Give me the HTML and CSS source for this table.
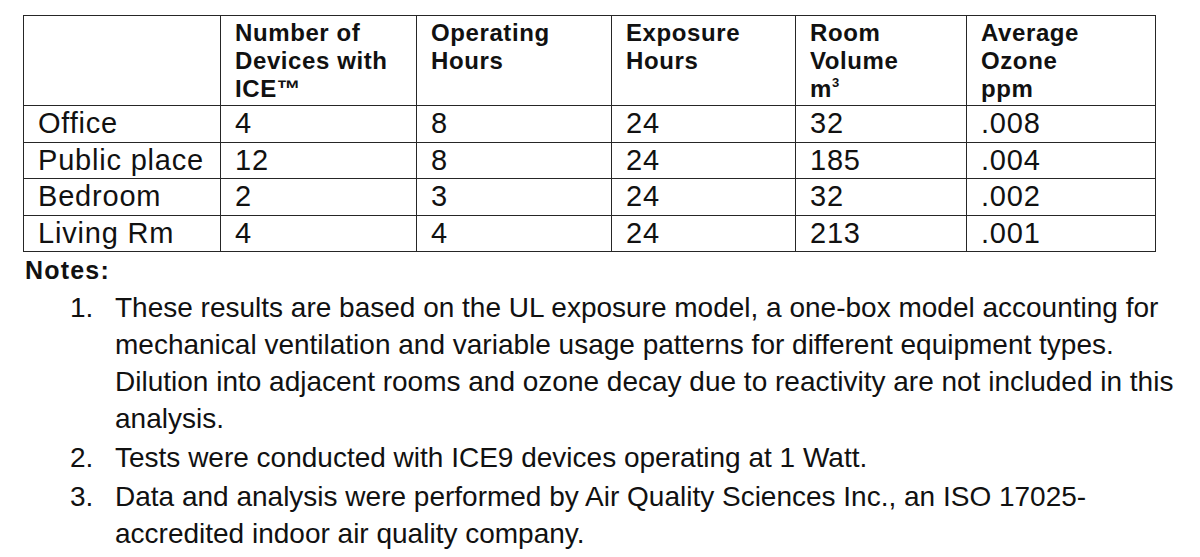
FILE: index.html
```html
<!DOCTYPE html>
<html lang="en">
<head>
<meta charset="utf-8">
<title>ICE Ozone Exposure</title>
<link rel="stylesheet" href="styles.css">
</head>
<body>
<main class="page">
  <table class="data">
    <colgroup>
      <col class="c1"><col class="c2"><col class="c3"><col class="c4"><col class="c5"><col class="c6">
    </colgroup>
    <thead>
      <tr>
        <th></th>
        <th>Number of Devices with ICE™</th>
        <th>Operating Hours</th>
        <th>Exposure Hours</th>
        <th>Room<br>Volume<br>m<sup>3</sup></th>
        <th>Average<br>Ozone<br>ppm</th>
      </tr>
    </thead>
    <tbody>
      <tr><td>Office</td><td>4</td><td>8</td><td>24</td><td>32</td><td>.008</td></tr>
      <tr><td>Public place</td><td>12</td><td>8</td><td>24</td><td>185</td><td>.004</td></tr>
      <tr><td>Bedroom</td><td>2</td><td>3</td><td>24</td><td>32</td><td>.002</td></tr>
      <tr><td>Living Rm</td><td>4</td><td>4</td><td>24</td><td>213</td><td>.001</td></tr>
    </tbody>
  </table>
  <section class="notes">
    <h2 class="notes-title">Notes:</h2>
    <ol class="notes-list">
      <li class="note"><span class="num">1.</span><span class="txt">These results are based on the UL exposure model, a one-box model accounting for mechanical ventilation and variable usage patterns for different equipment types. Dilution into adjacent rooms and ozone decay due to reactivity are not included in this analysis.</span></li>
      <li class="note"><span class="num">2.</span><span class="txt">Tests were conducted with ICE9 devices operating at 1 Watt.</span></li>
      <li class="note"><span class="num">3.</span><span class="txt">Data and analysis were performed by Air Quality Sciences Inc., an ISO 17025-accredited indoor air quality company.</span></li>
    </ol>
  </section>
</main>
</body>
</html>
```

FILE: styles.css
```css
html, body {
  margin: 0;
  padding: 0;
  background: #ffffff;
}

body {
  font-family: "Liberation Sans", Arial, sans-serif;
  color: #111111;
}

.page {
  padding: 15px 0 0 23px;
}

.data {
  border-collapse: collapse;
  table-layout: fixed;
  width: 1132px;
}

.c1 { width: 197px; }
.c2 { width: 196px; }
.c3 { width: 195px; }
.c4 { width: 184px; }
.c5 { width: 171px; }
.c6 { width: 189px; }

.data th,
.data td {
  border: 1px solid #262626;
  text-align: left;
  vertical-align: top;
}

.data th {
  font-weight: bold;
  font-size: 24px;
  letter-spacing: 0.6px;
  line-height: 28px;
  padding: 3px 14px 2px 14px;
  height: 84px;
}

.data th sup {
  font-size: 13px;
  letter-spacing: 0;
  line-height: 0;
  vertical-align: 10px;
}

.data td {
  font-size: 29px;
  letter-spacing: 0.8px;
  line-height: 35.5px;
  padding: 0 14px;
  white-space: nowrap;
}

.notes {
  margin-top: 5px;
}

.notes-title {
  margin: 0 0 0 2px;
  font-size: 25px;
  letter-spacing: 1.2px;
  line-height: 26px;
  font-weight: bold;
}

.notes-list {
  list-style: none;
  margin: 6px 0 0 0;
  padding: 0 0 0 47px;
  width: 1115px;
}

.note {
  display: grid;
  grid-template-columns: 45px 1fr;
  font-size: 28px;
  line-height: 37px;
  margin-bottom: 2px;
}
```
